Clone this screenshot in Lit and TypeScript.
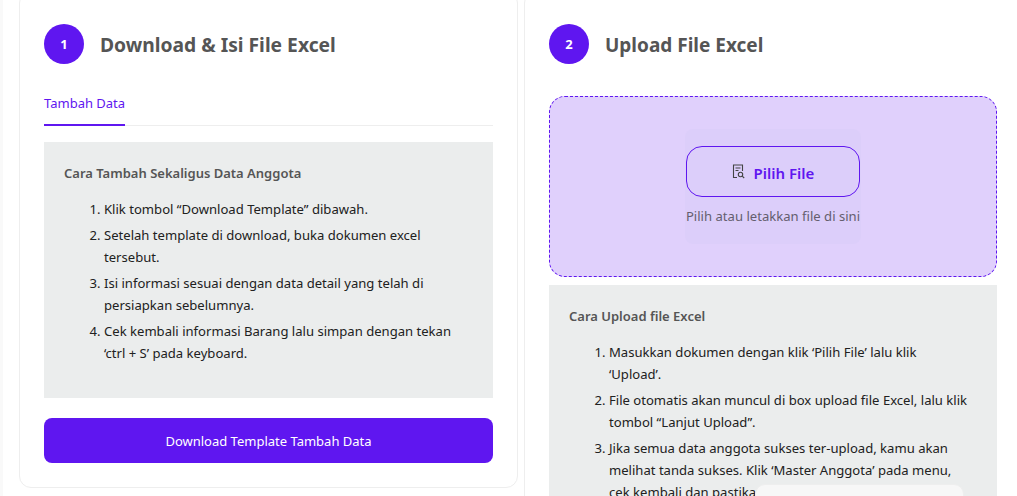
import { LitElement, html, css } from "lit";
import { customElement } from "lit/decorators.js";

@customElement("app-root")
export class AppRoot extends LitElement {
  static styles = css`
    :host { display: block; width: 1017px; height: 496px; overflow: hidden; position: relative; background: #fff; font-family: "Noto Sans", sans-serif; color: #212121; }
    .page { display: flex; gap: 6px; align-items: flex-start; margin-top: -9px; border-left: 3px solid #f9f9f9; width: 1100px; box-sizing: border-box; padding-left: 16px; }
    .card { box-sizing: border-box; border: 1px solid #eeeeee; border-radius: 12px; padding: 31px 24px 24px; background: #fff; }
    .c1 { width: 499px; height: 497px; }
    .c2 { width: 498px; height: 700px; }
    .head { display: flex; align-items: center; gap: 16px; height: 42px; }
    .num { width: 40px; height: 40px; border-radius: 50%; background: #5f16f0; color: #fff; font-weight: 700; font-size: 13px; display: flex; align-items: center; justify-content: center; flex: none; }
    h2 { margin: 2px 0 0; font-size: 19.26px; font-weight: 700; color: #555555; line-height: 28px; }
    .c2 h2 { font-size: 19px; }
    .tabs { margin-top: 22px; border-bottom: 1px solid #eeeeee; height: 39px; box-sizing: border-box; }
    .tab { display: inline-block; height: 39px; box-sizing: border-box; padding-top: 6px; font-size: 13px; line-height: 20px; color: #5f16f0; border-bottom: 2px solid #5f16f0; }
    .panel { background: #ebeded; padding: 22px 26px 20px 20px; margin-top: 16px; box-sizing: border-box; }
    .tabs + .panel { height: 256px; }
    .title { font-size: 13px; font-weight: 600; color: #555; line-height: 18px; margin: 0 0 16px; }
    ol { margin: 0; padding: 0 0 0 40px; font-size: 13.08px; line-height: 22px; color: #212121; }
    li { margin-bottom: 4px; }
    .btn { margin-top: 20px; height: 45px; border-radius: 8px; background: #5f16f0; color: #fff; font-size: 13px; display: flex; align-items: center; justify-content: center; }
    .drop { margin-top: 31px; height: 181px; border: 1px dashed #5f16f0; border-radius: 16px; background: #e0d0fc; box-sizing: border-box; display: flex; align-items: center; justify-content: center; }
    .inner { width: 176px; height: 115px; background: #dccefa; border-radius: 8px; display: flex; flex-direction: column; align-items: center; padding-top: 17px; box-sizing: border-box; }
    .pick { width: 174px; height: 51px; flex: none; box-sizing: border-box; border: 1px solid #5f16f0; border-radius: 16px; display: flex; align-items: center; justify-content: center; gap: 8px; color: #5f16f0; font-weight: 600; font-size: 15px; }
    .pick svg { display: block; margin-top: -1px; }
    .pick span { margin-top: 2px; }
    .hint { margin-top: 10px; font-size: 13.1px; line-height: 18px; color: #645e6e; white-space: nowrap; }
    .drop + .panel { margin-top: 8px; }
    .toast { position: absolute; left: 755px; top: 484px; width: 209px; height: 40px; background: #f7f7f7; border: 1px solid #eeeeee; border-radius: 10px; box-sizing: border-box; }
  `;

  render() {
    return html`
      <div class="page">
        <section class="card c1">
          <div class="head"><div class="num">1</div><h2>Download &amp; Isi File Excel</h2></div>
          <div class="tabs"><span class="tab">Tambah Data</span></div>
          <div class="panel">
            <p class="title">Cara Tambah Sekaligus Data Anggota</p>
            <ol>
              <li>Klik tombol “Download Template” dibawah.</li>
              <li>Setelah template di download, buka dokumen excel tersebut.</li>
              <li>Isi informasi sesuai dengan data detail yang telah di persiapkan sebelumnya.</li>
              <li>Cek kembali informasi Barang lalu simpan dengan tekan ‘ctrl + S’ pada keyboard.</li>
            </ol>
          </div>
          <div class="btn">Download Template Tambah Data</div>
        </section>
        <section class="card c2">
          <div class="head"><div class="num">2</div><h2>Upload File Excel</h2></div>
          <div class="drop">
            <div class="inner">
              <div class="pick">
                <svg width="14" height="15" viewBox="0 0 14 15" fill="none" stroke="#444" stroke-width="1.1"><path d="M5 13.5H1.5V1h9v6"/><path d="M3.5 4h5M3.5 6.5h3"/><circle cx="8.5" cy="10.5" r="2.2"/><path d="M10.2 12.2l2 1.8"/></svg>
                <span>Pilih File</span>
              </div>
              <div class="hint">Pilih atau letakkan file di sini</div>
            </div>
          </div>
          <div class="panel">
            <p class="title">Cara Upload file Excel</p>
            <ol>
              <li>Masukkan dokumen dengan klik ‘Pilih File’ lalu klik ‘Upload’.</li>
              <li>File otomatis akan muncul di box upload file Excel, lalu klik tombol “Lanjut Upload”.</li>
              <li>Jika semua data anggota sukses ter-upload, kamu akan melihat tanda sukses. Klik ‘Master Anggota’ pada menu, cek kembali dan pastikan data sudah benar.</li>
            </ol>
          </div>
        </section>
      </div>
      <div class="toast"></div>
    `;
  }
}
